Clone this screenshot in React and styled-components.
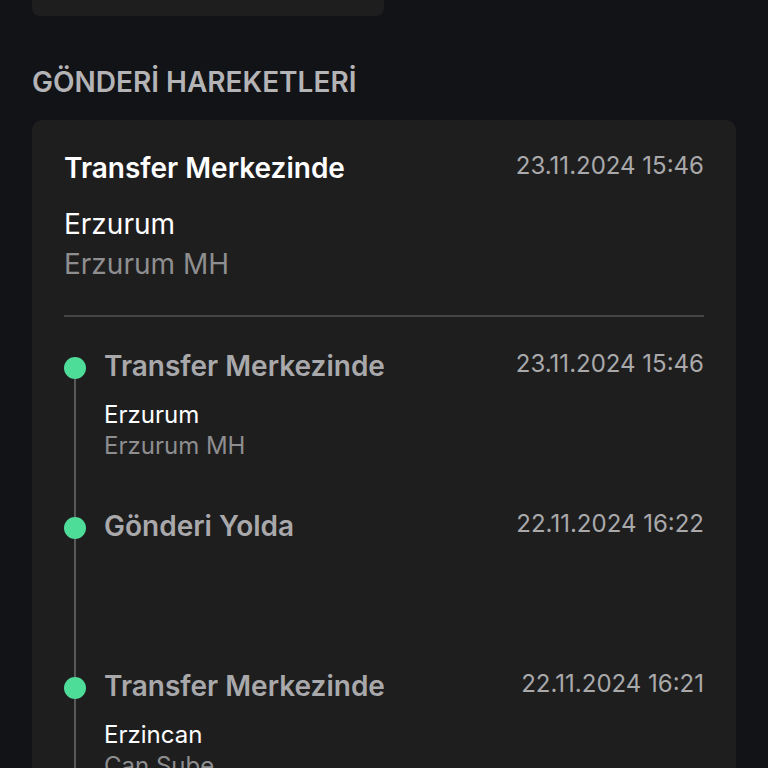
import React from "react";
import styled, { createGlobalStyle } from "styled-components";

const GlobalStyle = createGlobalStyle`
  html, body {
    margin: 0;
    padding: 0;
    background: #121316;
    font-family: Inter, "Noto Sans", sans-serif;
    -webkit-font-smoothing: antialiased;
  }
`;

const SPage = styled.div`
  width: 768px;
  height: 768px;
  overflow: hidden;
  padding: 0 32px;
  box-sizing: border-box;
  background: #121316;
`;

const STopCard = styled.div`
  width: 352px;
  height: 16px;
  background: #1e1e1f;
  border-radius: 0 0 8px 8px;
`;

const SSectionTitle = styled.h2`
  margin: 51px 0 0 0;
  font-size: 28px;
  line-height: 30px;
  font-weight: 600;
  color: #b4b4b7;
`;

const SCard = styled.section`
  margin-top: 23px;
  background: #1e1e1f;
  border-radius: 10px;
  padding: 32px 32px 0 32px;
  height: 700px;
  box-sizing: border-box;
`;

const SHeadRow = styled.div`
  display: flex;
  justify-content: space-between;
  align-items: flex-start;
`;

const SHeadTitle = styled.h3`
  margin: 0;
  font-size: 28px;
  line-height: 32px;
  font-weight: 600;
  color: #ffffff;
`;

const SDate = styled.div`
  font-size: 24px;
  line-height: 28px;
  color: #a9a9ab;
  white-space: nowrap;
`;

const SHeadCity = styled.div`
  margin-top: 20px;
  font-size: 28px;
  line-height: 40px;
  color: #ffffff;
`;

const SHeadBranch = styled.div`
  font-size: 28px;
  line-height: 40px;
  color: #8e8e90;
`;

const SDivider = styled.hr`
  margin: 31px 0 0;
  border: 0;
  height: 2px;
  background: #444446;
`;

const STimeline = styled.ol`
  list-style: none;
  margin: 33px 0 0;
  padding: 0;
`;

const SItem = styled.li`
  position: relative;
  height: 160px;
  padding-left: 40px;

  &::before {
    content: "";
    position: absolute;
    left: 10px;
    top: 20px;
    bottom: -20px;
    width: 2px;
    background: #59595b;
  }
`;

const SDot = styled.span`
  position: absolute;
  left: 0;
  top: 7px;
  width: 22px;
  height: 22px;
  border-radius: 50%;
  background: #4edc99;
`;

const SItemRow = styled.div`
  display: flex;
  justify-content: space-between;
  align-items: flex-start;
`;

const SItemTitle = styled.div`
  font-size: 28px;
  line-height: 32px;
  font-weight: 600;
  color: #a9a9ab;
`;

const SCity = styled.div`
  margin-top: 17px;
  font-size: 24px;
  line-height: 31px;
  color: #ffffff;
`;

const SBranch = styled.div`
  font-size: 24px;
  line-height: 31px;
  color: #8e8e90;
`;

const events = [
  {
    title: "Transfer Merkezinde",
    date: "23.11.2024 15:46",
    city: "Erzurum",
    branch: "Erzurum MH",
  },
  { title: "Gönderi Yolda", date: "22.11.2024 16:22" },
  {
    title: "Transfer Merkezinde",
    date: "22.11.2024 16:21",
    city: "Erzincan",
    branch: "Can Şube",
  },
];

const TimelineItem = ({ title, date, city, branch }) => (
  <SItem>
    <SDot />
    <SItemRow>
      <SItemTitle>{title}</SItemTitle>
      <SDate>{date}</SDate>
    </SItemRow>
    {city ? <SCity>{city}</SCity> : null}
    {branch ? <SBranch>{branch}</SBranch> : null}
  </SItem>
);

export default function App() {
  return (
    <SPage>
      <GlobalStyle />
      <STopCard />
      <SSectionTitle>GÖNDERİ HAREKETLERİ</SSectionTitle>
      <SCard>
        <SHeadRow>
          <SHeadTitle>Transfer Merkezinde</SHeadTitle>
          <SDate>23.11.2024 15:46</SDate>
        </SHeadRow>
        <SHeadCity>Erzurum</SHeadCity>
        <SHeadBranch>Erzurum MH</SHeadBranch>
        <SDivider />
        <STimeline>
          {events.map((e, i) => (
            <TimelineItem key={i} {...e} />
          ))}
        </STimeline>
      </SCard>
    </SPage>
  );
}
